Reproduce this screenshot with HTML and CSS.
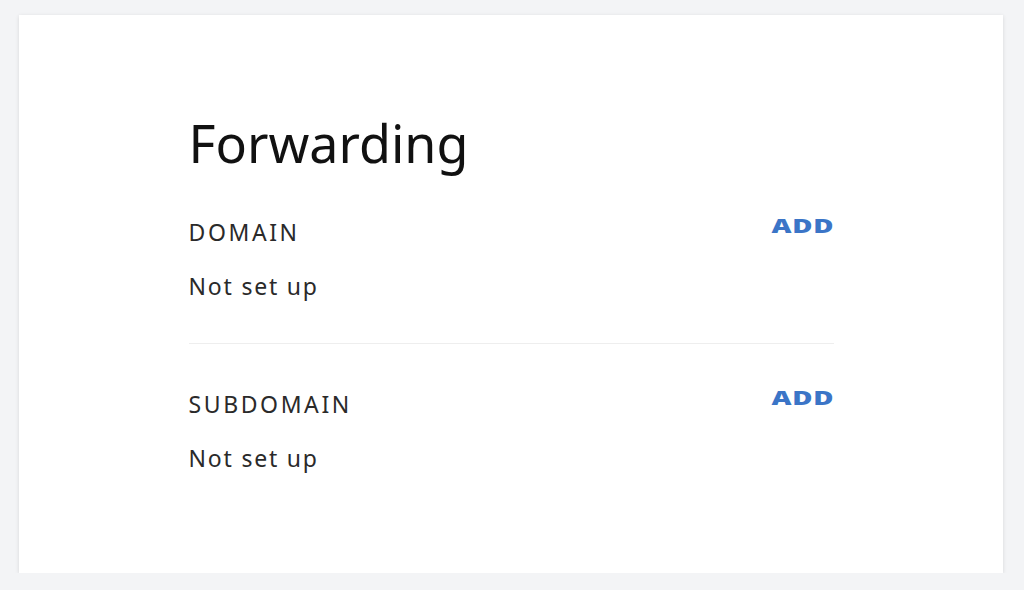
FILE: index.html
```html
<!DOCTYPE html>
<html lang="en">
<head>
  <meta charset="UTF-8">
  <meta name="viewport" content="width=device-width, initial-scale=1.0">
  <title>Forwarding</title>
  <link rel="stylesheet" href="styles.css">
</head>
<body>
  <div class="card">
    <div class="content">
      <h1>Forwarding</h1>

      <div class="section">
        <div class="row">
          <span class="label">DOMAIN</span>
          <a class="add" href="#">ADD</a>
        </div>
        <p class="value">Not set up</p>
      </div>

      <div class="section">
        <div class="row">
          <span class="label">SUBDOMAIN</span>
          <a class="add" href="#">ADD</a>
        </div>
        <p class="value">Not set up</p>
      </div>
    </div>
  </div>
</body>
</html>
```

FILE: styles.css
```css
body {
  margin: 0;
  padding: 15px 21px 0 19px;
  background-color: #f3f4f6;
  font-family: 'Noto Sans', 'Open Sans', sans-serif;
  color: #2a2a2a;
}
.card {
  background-color: #fff;
  height: 558px;
  box-sizing: border-box;
  box-shadow: 0 1px 4px rgba(0, 0, 0, 0.12);
  padding: 96px 0 0;
}
.content {
  width: 645px;
  margin: 0 auto;
}
h1 {
  font-size: 52px;
  font-weight: 400;
  color: #111;
  margin: 0;
  line-height: 64px;
}
.section {
  padding: 41px 0 41px;
}
.section + .section {
  border-top: 1px solid #eeeeee;
  padding-top: 44px;
}
.row {
  display: flex;
  justify-content: space-between;
  align-items: center;
  height: 32px;
}
.label {
  font-size: 23px;
  letter-spacing: 2.6px;
  line-height: 32px;
}
.add {
  display: inline-block;
  font-size: 19px;
  font-weight: 900;
  line-height: 20px;
  letter-spacing: 0.5px;
  color: #3b75c7;
  text-decoration: none;
  margin: 0 -1px 12px 0;
  transform: scaleX(1.45);
  transform-origin: right center;
}
.value {
  font-size: 23px;
  letter-spacing: 1.8px;
  margin: 22px 0 0;
  line-height: 32px;
}
```
